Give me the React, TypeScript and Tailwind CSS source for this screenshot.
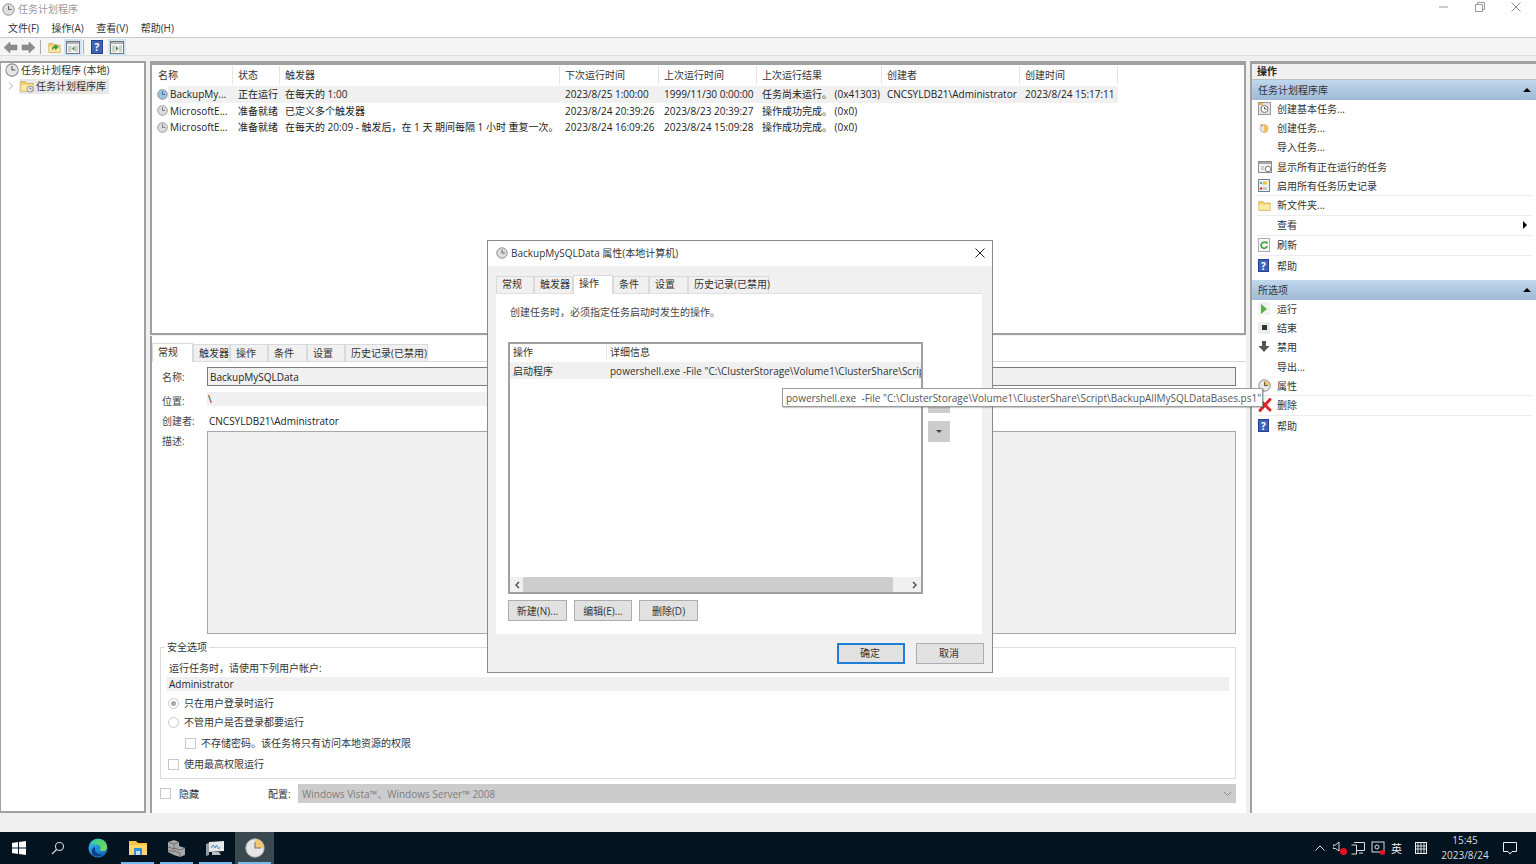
import React from "react";

const FONT = "font-['Open_Sans','Noto_Sans_CJK_SC',sans-serif]";

function Clock({ c = "#d8d8d8", size = 13, hand = "#555", wedge }: { c?: string; size?: number; hand?: string; wedge?: string }) {
  return (
    <svg width={size} height={size} viewBox="0 0 16 16" className="shrink-0">
      <circle cx="8" cy="8" r="7" fill={c} stroke="#8a8a8a" strokeWidth="1.2" />
      {wedge && <path d="M8 8V2a6 6 0 0 1 6 6z" fill={wedge} />}
      <path d="M8 3.500V8h3.800" fill="none" stroke={hand} strokeWidth="1.2" />
    </svg>
  );
}

function Folder({ size = 14, clock = false, up = false }: { size?: number; clock?: boolean; up?: boolean }) {
  return (
    <svg width={size} height={size} viewBox="0 0 16 16" className="shrink-0">
      <path d="M1 3h5l1.500 2H15v9H1z" fill="#f4cf68" stroke="#c9a24a" strokeWidth="0.8" />
      <path d="M1.500 6.500h13V13.500h-13z" fill="#fbe7a6" />
      {clock && <circle cx="11.500" cy="11.500" r="3.500" fill="#e8e8e8" stroke="#777" strokeWidth="0.8" />}
      {clock && <path d="M11.500 9.500v2h1.800" stroke="#444" strokeWidth="0.7" fill="none" />}
      {up && <path d="M5 11c0-4 2-5 4-5V4l4 3.500L9 11V8.500c-1.500 0-3 .5-4 2.500z" fill="#43a336" stroke="#2c7d24" strokeWidth="0.4" />}
    </svg>
  );
}

function Help({ size = 13 }: { size?: number }) {
  return (
    <span
      style={{ width: size - 2, height: size }}
      className="flex items-center justify-center bg-[#3f62b8] border border-[#27428c] text-white text-[10px] font-bold leading-none shrink-0"
    >
      ?
    </span>
  );
}

function PanelIcon({ arrow, left }: { arrow: string; left?: boolean }) {
  return (
    <svg width="14" height="13" viewBox="0 0 14 13">
      <rect x="0.500" y="0.500" width="13" height="12" fill="#f4f4f4" stroke="#777" />
      <rect x="1" y="1" width="12" height="2" fill="#b5b5b5" />
      <rect x="2" y="4.500" width="3.500" height="6.500" fill="#cfcfcf" />
      <rect x="9" y="4.500" width="3" height="6.500" fill="#cfcfcf" />
      <path d={left ? "M8.500 5v5L6 7.500z" : "M6 5v5l2.500-2.500z"} fill={arrow} />
    </svg>
  );
}

function Arrow({ dir }: { dir: "l" | "r" }) {
  return (
    <svg width="15" height="13" viewBox="0 0 15 13">
      <path
        d={dir === "l" ? "M1 6.500 7 1v3h7v5H7v3z" : "M14 6.500 8 1v3H1v5h7v3z"}
        fill="#8c8c8c"
        stroke="#777"
        strokeWidth="0.5"
      />
    </svg>
  );
}

const headers = ["名称", "状态", "触发器", "下次运行时间", "上次运行时间", "上次运行结果", "创建者", "创建时间"];
const cols = "grid grid-cols-[65px_47px_280px_99px_98px_125px_138px_98px]";
const rows = [
  {
    running: true,
    cells: ["BackupMy...", "正在运行", "在每天的 1:00", "2023/8/25 1:00:00", "1999/11/30 0:00:00", "任务尚未运行。 (0x41303)", "CNCSYLDB21\\Administrator", "2023/8/24 15:17:11"],
  },
  {
    running: false,
    cells: ["MicrosoftE...", "准备就绪", "已定义多个触发器", "2023/8/24 20:39:26", "2023/8/23 20:39:27", "操作成功完成。 (0x0)", "", ""],
  },
  {
    running: false,
    cells: ["MicrosoftE...", "准备就绪", "在每天的 20:09 - 触发后，在 1 天 期间每隔 1 小时 重复一次。", "2023/8/24 16:09:26", "2023/8/24 15:09:28", "操作成功完成。 (0x0)", "", ""],
  },
];

function TaskTable() {
  return (
    <div className="h-[274px] shrink-0 bg-white border-2 border-t-4 border-[#a0a0a0] pl-[1px] pt-[1px]">
      <div className="flex h-[18px] w-[966px] items-center mb-[2px]">
        {headers.map((h, i) => (
          <div
            key={h}
            style={{ width: [80, 47, 280, 99, 98, 125, 138, 98][i] }}
            className="h-full pl-[5px] flex items-center border-r border-[#e5e5e5] text-[#333]"
          >
            {h}
          </div>
        ))}
      </div>
      {rows.map((r, i) => (
        <div key={i} className="flex h-[16.500px] items-center">
          <div className="w-[15px] pl-[4px] flex">
            <Clock size={11} c={r.running ? "#9cc0e0" : "#dcdcdc"} hand={r.running ? "#2c5d90" : "#666"} />
          </div>
          <div className={`${cols} h-full items-center ${r.running ? "bg-[#f0f0f0]" : ""}`}>
            {r.cells.map((c, j) => (
              <div key={j} className={`whitespace-nowrap overflow-visible text-[#222] ${j === 0 ? "pl-[2px]" : "pl-[5px]"}`}>
                {c}
              </div>
            ))}
          </div>
        </div>
      ))}
    </div>
  );
}

const tabLabels = ["常规", "触发器", "操作", "条件", "设置", "历史记录(已禁用)"];

function Tabs({ active, widths, h = 18, lift }: { active: number; widths: number[]; h?: number; lift?: boolean }) {
  return (
    <div className="flex items-end" style={{ height: h + 1 }}>
      {tabLabels.map((t, i) => (
        <div
          key={t}
          style={{ width: widths[i] }}
          className={`flex items-center pl-[5px] whitespace-nowrap text-[#333] border border-b-0 border-[#dadada] ${
            i === active
              ? `bg-white h-full z-10 -mb-px ${lift ? "pb-[5px]" : "pb-[3px]"}`
              : `bg-[#f0f0f0] h-[calc(100%-2px)] ${lift ? "pb-[2px]" : ""}`
          }`}
        >
          {t}
        </div>
      ))}
    </div>
  );
}

function Check({ className = "" }: { className?: string }) {
  return <span className={`w-[11px] h-[11px] border border-[#c8c8c8] bg-white shrink-0 ${className}`} />;
}

function Radio({ on }: { on?: boolean }) {
  return (
    <span className="w-[11px] h-[11px] rounded-full border border-[#c8c8c8] bg-white flex items-center justify-center shrink-0">
      {on && <span className="w-[5px] h-[5px] rounded-full bg-[#a8a8a8]" />}
    </span>
  );
}

function Detail() {
  return (
    <div className="flex-1 bg-white border-l-2 border-[#a0a0a0] pt-[8px] flex flex-col min-h-0">
      <div className="border-b border-[#dadada] h-[18px] flex items-end">
        <Tabs active={0} widths={[41, 37, 38, 39, 38, 83]} />
      </div>
      <div className="pl-[10px] pr-[10px] pt-[5px] flex flex-col text-[#444]">
        <div className="flex items-center h-[19px]">
          <div className="w-[45px] shrink-0 pt-px">名称:</div>
          <div className="flex-1 h-full bg-[#f0f0f0] border border-[#7a7a7a] flex items-center pl-[2px] text-[#222]">BackupMySQLData</div>
        </div>
        <div className="flex items-center h-[14px] mt-[6px]">
          <div className="w-[45px] shrink-0 pt-[4px]">位置:</div>
          <div className="flex-1 h-full bg-[#f0f0f0] pl-[1px] text-[#222] leading-[14px]">\</div>
        </div>
        <div className="flex items-center h-[15px] mt-[7px]">
          <div className="w-[45px] shrink-0">创建者:</div>
          <div className="flex-1 pl-[2px] text-[#222]">CNCSYLDB21\Administrator</div>
        </div>
        <div className="flex h-[203px] mt-[3px]">
          <div className="w-[45px] shrink-0 pt-[5px]">描述:</div>
          <div className="flex-1 bg-[#f0f0f0] border border-[#a8a8a8]" />
        </div>
      </div>
      <div className="relative mt-[13px] h-[132px] border border-[#dcdcdc] mr-[10px] ml-[8px] pl-[6px] pr-[6px] pt-[13px] text-[#333]">
        <div className="absolute -top-[9px] left-[4px] bg-white px-[2px] h-[15px] flex items-center">安全选项</div>
        <div className="pl-[2px] h-[14px] flex items-center">运行任务时，请使用下列用户帐户:</div>
        <div className="bg-[#f0f0f0] h-[14px] pl-[2px] mt-[2px] flex items-center text-[#222]">Administrator</div>
        <div className="flex items-center gap-[5px] h-[14px] mt-[5px] pl-px"><Radio on />只在用户登录时运行</div>
        <div className="flex items-center gap-[5px] h-[14px] mt-[5px] pl-px"><Radio />不管用户是否登录都要运行</div>
        <div className="flex items-center gap-[5px] h-[14px] mt-[7px] pl-[18px]"><Check />不存储密码。该任务将只有访问本地资源的权限</div>
        <div className="flex items-center gap-[5px] h-[14px] mt-[7px] pl-px"><Check />使用最高权限运行</div>
      </div>
      <div className="flex items-center h-[19px] mt-[5px] pl-[8px] pr-[10px] text-[#333]">
        <Check />
        <span className="ml-[8px] w-[89px]">隐藏</span>
        <span className="w-[30px]">配置:</span>
        <div className="flex-1 h-full bg-[#cccccc] flex items-center justify-between pl-[4px] pr-[4px] text-[#7c7c7c]">
          <span>Windows Vista™、Windows Server™ 2008</span>
          <svg width="9" height="6" viewBox="0 0 9 6"><path d="M1 1l3.500 3.500L8 1" fill="none" stroke="#888" /></svg>
        </div>
      </div>
    </div>
  );
}

function SectionHead({ title }: { title: string }) {
  return (
    <div className="h-[20px] bg-gradient-to-b from-[#c0d7ec] to-[#9fbad7] flex items-center justify-between pl-[6px] pr-[5px] text-[#333]">
      <span>{title}</span>
      <span className="w-0 h-0 border-l-[4px] border-r-[4px] border-b-[4px] border-l-transparent border-r-transparent border-b-black" />
    </div>
  );
}

function Action({ icon, label, sep, arrow, lift, h = 19.200 }: { icon?: React.ReactNode; label: string; sep?: boolean; arrow?: boolean; lift?: boolean; h?: number }) {
  return (
    <div style={{ height: h }} className={`flex items-center ml-[5px] mr-[4px] text-[#333] ${sep ? "border-b border-[#ececec]" : ""} ${lift ? "pb-[2px]" : ""}`}>
      <div className="w-[19px] ml-[1px] flex items-center justify-start shrink-0">{icon}</div>
      <span className="flex-1">{label}</span>
      {arrow && <span className="w-0 h-0 mr-[5px] border-t-[4px] border-b-[4px] border-l-[4px] border-t-transparent border-b-transparent border-l-black" />}
    </div>
  );
}

function ActionsPane() {
  const basic = (
    <div className="relative w-[13px] h-[13px] bg-[#e4e4e4] border border-[#999]">
      <svg viewBox="0 0 11 11" className="w-full h-full"><circle cx="5.500" cy="6" r="3.500" fill="#fff" stroke="#777" /><path d="M5.500 4v2h2" stroke="#555" fill="none" /><rect width="4" height="2" fill="#f0b040" /></svg>
    </div>
  );
  const create = (
    <svg width="13" height="13" viewBox="0 0 13 13"><circle cx="6" cy="7.500" r="4" fill="#e2e6ea" stroke="#bbb" /><path d="M6 3.500a4 4 0 0 1 0 8z" fill="#f1c15c" /><path d="M2 3l3 1-1 2z" fill="#d9902c" /></svg>
  );
  const running = (
    <svg width="14" height="12" viewBox="0 0 14 12"><rect x="0.500" y="0.500" width="13" height="11" fill="#f2f2f2" stroke="#8a8a8a" /><rect x="1" y="1" width="12" height="2" fill="#a8a8a8" /><circle cx="10" cy="8" r="2.800" fill="#fff" stroke="#777" /><path d="M3 6h3M3 8h3" stroke="#aaa" /></svg>
  );
  const history = (
    <svg width="12" height="13" viewBox="0 0 12 13"><rect x="0.500" y="0.500" width="11" height="12" fill="#eef2f6" stroke="#6d7f95" /><rect x="5" y="2.500" width="4" height="3" fill="#f0c040" /><rect x="5" y="8" width="4" height="3" fill="#c9c9c9" /><circle cx="3" cy="9.500" r="1.300" fill="#d33" /><circle cx="3" cy="4" r="1.300" fill="#6a8" /></svg>
  );
  const refresh = (
    <svg width="12" height="14" viewBox="0 0 12 14"><rect x="0.500" y="0.500" width="11" height="13" fill="#f6f6f6" stroke="#aab" /><path d="M9 8a3 3 0 1 1-1-3" fill="none" stroke="#3da03d" strokeWidth="1.600" /><path d="M6.500 3.500H9.500V6.500z" fill="#3da03d" /></svg>
  );
  return (
    <div className="w-[286px] shrink-0 bg-white border-l-[2px] border-t-[3px] border-[#a0a0a0]">
      <div className="h-[14px] bg-[#f0f0f0] border-b border-[#bdbdbd] flex items-center pl-[5px] font-semibold text-[#222] box-content pb-px">操作</div>
      <SectionHead title="任务计划程序库" />
      <div>
        <Action icon={basic} label="创建基本任务..." lift />
        <Action icon={create} label="创建任务..." lift />
        <Action label="导入任务..." lift />
        <Action icon={running} label="显示所有正在运行的任务" />
        <Action icon={history} label="启用所有任务历史记录" sep />
        <Action icon={<Folder size={13} />} label="新文件夹..." sep h={20} />
        <Action label="查看" arrow sep h={20} />
        <Action icon={refresh} label="刷新" sep h={20} />
        <Action icon={<Help size={13} />} label="帮助" h={20} />
      </div>
      <div className="h-[4px]" />
      <SectionHead title="所选项" />
      <div>
        <Action lift icon={<span className="w-[12px] h-[13px] bg-[#f2f2f2] flex items-center justify-center"><span className="w-0 h-0 border-t-[5px] border-b-[5px] border-l-[6px] border-t-transparent border-b-transparent border-l-[#4fb53a]" /></span>} label="运行" />
        <Action lift icon={<span className="w-[12px] h-[12px] bg-[#ececec] flex items-center justify-center"><span className="w-[5px] h-[5px] bg-[#333]" /></span>} label="结束" />
        <Action lift icon={<svg width="12" height="13" viewBox="0 0 12 13"><path d="M4 1h4v5h3.500L6 12 .5 6H4z" fill="#555" /></svg>} label="禁用" />
        <Action label="导出..." />
        <Action icon={<Clock size={13} c="#e8e8e8" wedge="#f1c15c" />} label="属性" sep />
        <Action icon={<svg width="14" height="14" viewBox="0 0 14 14"><path d="M2 2l10 10M12 1.500 2 12.500" stroke="#e0272a" strokeWidth="3" strokeLinecap="round" /></svg>} label="删除" sep h={20} />
        <Action icon={<Help size={13} />} label="帮助" h={20} />
      </div>
    </div>
  );
}

function DialogButton({ w, label, focus, tight }: { w: number; label: string; focus?: boolean; tight?: boolean }) {
  return (
    <div
      style={{ width: w }}
      className={`flex items-center justify-center text-[#333] bg-[#e1e1e1] ${focus ? "border-2 border-[#1f7fd6]" : "border border-[#adadad]"} ${tight ? "pb-[2px] pr-[2px]" : ""}`}
    >
      {label}
    </div>
  );
}

function Dialog() {
  return (
    <div className="absolute left-[487px] top-[240px] w-[506px] h-[433px] bg-[#f0f0f0] border border-[#8a8a8a] flex flex-col z-20">
      <div className="h-[25px] mb-px bg-white flex items-center pl-[8px] pr-[7px] pb-[2px] text-[#333] shrink-0">
        <Clock size={12} c="#dcdcdc" />
        <span className="ml-[3px] flex-1">BackupMySQLData 属性(本地计算机)</span>
        <svg width="10" height="10" viewBox="0 0 10 10"><path d="M.5.500l9 9M9.500.500l-9 9" stroke="#222" strokeWidth="1" /></svg>
      </div>
      <div className="ml-[8px] mt-[7px] h-[19px]">
        <Tabs active={2} widths={[38, 39, 40, 36, 39, 81]} h={18} lift />
      </div>
      <div className="ml-[8px] w-[486px] h-[341px] bg-white flex flex-col pl-[12px] border-t border-[#e0e0e0] shrink-0">
        <div className="mt-[10px] h-[15px] flex items-center pl-[2px] text-[#444]">创建任务时，必须指定任务启动时发生的操作。</div>
        <div className="mt-[23px] flex items-start">
          <div className="w-[415px] h-[252px] border-2 border-[#a0a0a0] flex flex-col shrink-0 bg-white">
            <div className="flex h-[18px] items-center text-[#333] pb-[2px]">
              <div className="w-[97px] h-full pl-[3px] flex items-center border-r border-[#e5e5e5] shrink-0">操作</div>
              <div className="pl-[3px]">详细信息</div>
            </div>
            <div className="flex h-[17px] bg-[#f0f0f0] items-center text-[#333] overflow-hidden">
              <div className="w-[97px] pl-[3px] shrink-0">启动程序</div>
              <div className="pl-[3px] whitespace-nowrap">powershell.exe -File "C:\ClusterStorage\Volume1\ClusterShare\Script\BackupAllMySQLDataBases.ps1"</div>
            </div>
            <div className="flex-1" />
            <div className="h-[15px] bg-[#f0f0f0] flex items-center">
              <div className="w-[13px] flex justify-center"><svg width="6" height="8" viewBox="0 0 6 8"><path d="M5 1 2 4l3 3" fill="none" stroke="#444" strokeWidth="1.300" /></svg></div>
              <div className="w-[370px] h-full bg-[#cdcdcd]" />
              <div className="flex-1 flex justify-end pr-[3px]"><svg width="6" height="8" viewBox="0 0 6 8"><path d="m1 1 3 3-3 3" fill="none" stroke="#444" strokeWidth="1.300" /></svg></div>
            </div>
          </div>
          <div className="ml-[5px] mt-[50px] flex flex-col gap-[8px] w-[22px]">
            <div className="h-[21px] bg-[#cccccc]" />
            <div className="h-[21px] bg-[#cccccc] flex items-center justify-center">
              <span className="w-0 h-0 border-l-[3px] border-r-[3px] border-t-[3px] border-l-transparent border-r-transparent border-t-[#444]" />
            </div>
          </div>
        </div>
        <div className="flex gap-[7px] mt-[6px] h-[21px]">
          <DialogButton w={59} label="新建(N)..." />
          <DialogButton w={58} label="编辑(E)..." />
          <DialogButton w={59} label="删除(D)" />
        </div>
      </div>
      <div className="flex justify-end gap-[11px] mt-[9px] pr-[8px] h-[21px]">
        <DialogButton w={68} label="确定" focus tight />
        <DialogButton w={68} label="取消" tight />
      </div>
    </div>
  );
}

function Tooltip() {
  return (
    <div className="absolute left-[782px] top-[388px] w-[481px] h-[19px] bg-white border border-[#9a9a9a] flex items-center pl-[3px] text-[#555] whitespace-nowrap z-30 shadow-[1px_1px_1px_rgba(0,0,0,0.2)]">
      powershell.exe&nbsp; -File "C:\ClusterStorage\Volume1\ClusterShare\Script\BackupAllMySQLDataBases.ps1"
    </div>
  );
}

function TaskSlot({ children, w = 40, ul, active }: { children: React.ReactNode; w?: number; ul?: boolean; active?: boolean }) {
  return (
    <div style={{ width: w }} className={`h-full flex items-center justify-center relative shrink-0 ${active ? "bg-[#3a4850]" : ""}`}>
      {children}
      {ul && <span className="absolute bottom-0 left-[3px] right-[3px] h-[2px] bg-[#76b9ed]" />}
    </div>
  );
}

function Taskbar() {
  return (
    <div className="h-[32px] bg-[#03131f] flex items-center shrink-0">
      <TaskSlot w={38}>
        <svg width="14" height="14" viewBox="0 0 14 14"><path d="M0 2l6-.9V6.500H0zM7 1l7-1v6.500H7zM0 7.500h6v5.400l-6-.9zM7 7.500h7V14l-7-1z" fill="#fff" /></svg>
      </TaskSlot>
      <TaskSlot w={40}>
        <svg width="14" height="14" viewBox="0 0 14 14"><circle cx="8.500" cy="5.500" r="4" fill="none" stroke="#d8d8d8" strokeWidth="1.100" /><path d="M5.500 8.500 1 13" stroke="#d8d8d8" strokeWidth="1.300" /></svg>
      </TaskSlot>
      <TaskSlot w={40}>
        <svg width="20" height="20" viewBox="0 0 20 20">
          <defs>
            <linearGradient id="edgeA" x1="0" y1="0" x2="1" y2="1"><stop offset="0" stopColor="#35c1f1" /><stop offset="1" stopColor="#0b5fb8" /></linearGradient>
            <linearGradient id="edgeB" x1="0" y1="0" x2="1" y2="1"><stop offset="0" stopColor="#2ecf9a" /><stop offset="1" stopColor="#7fdc50" /></linearGradient>
          </defs>
          <circle cx="10" cy="10" r="9.500" fill="url(#edgeA)" />
          <path d="M3 6C5 1 13-1 17 4c2.500 3 2.500 6.500 1 8-1.500 1.500-5 1.500-6.500 0 2-1.500 1.500-4-1-5C7.500 6 4.500 7 3 6z" fill="url(#edgeB)" />
          <path d="M7 11c0 4 4 6 8 5-2 2.500-7 3.500-10 1-2-2-2-7 2-8 0 0 0 1 0 2z" fill="#0d3f8a" />
        </svg>
      </TaskSlot>
      <TaskSlot w={39} ul>
        <svg width="18" height="16" viewBox="0 0 18 16"><path d="M0 1h7l2 2h9v12H0z" fill="#f6c544" /><rect y="5" width="18" height="10" fill="#fcd76a" /><rect x="5" y="8" width="8" height="7" fill="#2f8fdc" /><rect x="7" y="11" width="4" height="4" fill="#bfe2fb" /></svg>
      </TaskSlot>
      <TaskSlot w={39} ul>
        <svg width="20" height="18" viewBox="0 0 20 18"><path d="M1 3l6-2 5 2v4l6 2v7l-5 2-6-2-6-3z" fill="#a9a9a9" /><path d="M1 3l6 2 5-2M7 5v7l6 2v4M1 8l6 2M1 11l6 2M7 9l6 2 5-2" fill="none" stroke="#6a6a6a" strokeWidth="0.900" /></svg>
      </TaskSlot>
      <TaskSlot w={39} ul>
        <svg width="20" height="17" viewBox="0 0 20 17"><path d="M3 2l15-1v10L3 12z" fill="#e8e8e8" /><path d="M5 8l2-3 2 3 1.500-3 2 4 2-2" fill="none" stroke="#4a8bc4" /><path d="M0 4l3-1v12l-3 1z" fill="#9a9a9a" /><path d="M6 12v3h9l-2-3z" fill="#bdbdbd" /></svg>
      </TaskSlot>
      <TaskSlot w={39} ul active>
        <svg width="20" height="20" viewBox="0 0 20 20"><circle cx="10" cy="10" r="9.200" fill="#e6e6e6" stroke="#b0b0b0" /><path d="M10 10V1a9 9 0 0 1 9 9z" fill="#f1c871" /><path d="M10 4v6h6" fill="none" stroke="#777" strokeWidth="1.100" /></svg>
      </TaskSlot>
      <div className="flex-1" />
      <div className="flex items-center h-full text-[#e8e8e8]">
        <svg width="10" height="6" viewBox="0 0 10 6" className="mr-[8px]"><path d="M.5 5.500 5 1l4.500 4.500" fill="none" stroke="#ddd" strokeWidth="1" /></svg>
        <span className="relative w-[14px] h-[14px] mr-[4px]">
          <svg width="8" height="12" viewBox="0 0 8 12" className="absolute left-0 top-0"><path d="M0 4h2.500L6 1v9L2.500 7.500H0z" fill="none" stroke="#ddd" /></svg>
          <span className="absolute right-0 bottom-0 w-[7px] h-[7px] rounded-full bg-[#e81123]" />
        </span>
        <svg width="14" height="13" viewBox="0 0 14 13" className="mr-[6px]"><path d="M3 .5h10.500v8H6M.5 3h5v9h-5M8 11h4" fill="none" stroke="#ddd" /></svg>
        <span className="relative w-[14px] h-[14px] mr-[6px]">
          <svg width="14" height="13" viewBox="0 0 14 13"><rect x="1" y="1" width="12" height="10" fill="none" stroke="#ddd" /><circle cx="6" cy="6" r="2" fill="none" stroke="#ddd" /></svg>
          <span className="absolute right-0 bottom-0 w-[5px] h-[5px] rounded-full bg-[#e81123]" />
        </span>
        <span className="text-[11px] w-[13px] mr-[11px] text-[#eee]">英</span>
        <svg width="12" height="12" viewBox="0 0 12 12" className="mr-[13px]"><rect x="0.500" y="0.500" width="11" height="11" fill="none" stroke="#eee" /><path d="M3 1v10M6 1v10M9 1v10M1 4h10M1 7h10" stroke="#eee" strokeWidth="0.900" /></svg>
        <div className="w-[50px] flex flex-col items-center text-[10px] leading-[15px] text-[#ddd]">
          <span>15:45</span>
          <span>2023/8/24</span>
        </div>
        <svg width="14" height="13" viewBox="0 0 14 13" className="ml-[13px] mr-[19px]"><path d="M.5.500h13v9H9L7 12 5 9.500H.5z" fill="none" stroke="#eee" /></svg>
      </div>
    </div>
  );
}

export default function App() {
  return (
    <div className={`${FONT} relative w-[1536px] h-[864px] overflow-hidden bg-[#f0f0f0] text-[10px] leading-none flex flex-col`}>
      <div className="h-[18px] bg-white flex items-center shrink-0">
        <div className="pl-[2px]"><Clock size={13} c="#e0e0e0" /></div>
        <span className="ml-[3px] text-[#9a9a9a]">任务计划程序</span>
        <div className="flex-1" />
        <div className="flex items-center gap-[26px] pr-[15px] pb-[4px]">
          <svg width="10" height="10" viewBox="0 0 10 10"><path d="M0 5h9" stroke="#999" /></svg>
          <svg width="10" height="10" viewBox="0 0 10 10"><path d="M2.500 2.500V.5h7v7h-2M.5 2.500h7v7h-7z" fill="none" stroke="#999" /></svg>
          <svg width="10" height="10" viewBox="0 0 10 10"><path d="M.5.500l9 9M9.500.500l-9 9" stroke="#888" /></svg>
        </div>
      </div>
      <div className="h-[20px] bg-white flex items-center pl-[8px] pt-[1px] gap-[12.500px] text-[#333] border-b border-[#c8c8c8] shrink-0">
        <span>文件(F)</span><span>操作(A)</span><span>查看(V)</span><span>帮助(H)</span>
      </div>
      <div className="h-[18px] bg-[#f5f5f5] border-b border-[#dcdcdc] flex items-center pl-[3px] pt-px shrink-0">
        <Arrow dir="l" />
        <span className="ml-[3px]"><Arrow dir="r" /></span>
        <span className="w-px h-[14px] bg-[#aaa] ml-[4px]" />
        <span className="ml-[7px]"><Folder size={13} up /></span>
        <span className="ml-[3px] w-[18px] h-[17px] bg-[#cfe4f7] flex items-center justify-center"><PanelIcon arrow="#2f9b3f" left /></span>
        <span className="w-px h-[14px] bg-[#aaa] ml-[1px]" />
        <span className="ml-[7px]"><Help size={14} /></span>
        <span className="ml-[5px] w-[18px] h-[17px] bg-[#cfe4f7] flex items-center justify-center"><PanelIcon arrow="#2f9b3f" /></span>
      </div>
      <div className="flex-1 flex pt-[5px] min-h-0">
        <div className="w-[146px] shrink-0 bg-white border-2 border-l border-[#a0a0a0] pl-[4px] text-[#333]">
          <div className="flex items-center h-[14px] gap-[2px]"><Clock size={14} c="#e6e6e6" /><span>任务计划程序 (本地)</span></div>
          <div className="flex items-center h-[16px] mt-px">
            <svg width="14" height="10" viewBox="0 0 14 10" className="shrink-0"><path d="M4 1.500 7.500 5 4 8.500" fill="none" stroke="#aaa" /></svg>
            <div className="flex items-center gap-[2px] bg-[#e8e8e8] h-[15px] pl-[1px] pr-[3px]"><Folder size={14} clock /><span>任务计划程序库</span></div>
          </div>
        </div>
        <div className="ml-[4px] w-[1096px] shrink-0 flex flex-col">
          <TaskTable />
          <div className="h-[1px] shrink-0" />
          <Detail />
        </div>
        <div className="ml-[4px] flex">
          <ActionsPane />
        </div>
      </div>
      <div className="h-[19px] bg-[#f0f0f0] shrink-0" />
      <Taskbar />
      <Dialog />
      <Tooltip />
    </div>
  );
}
